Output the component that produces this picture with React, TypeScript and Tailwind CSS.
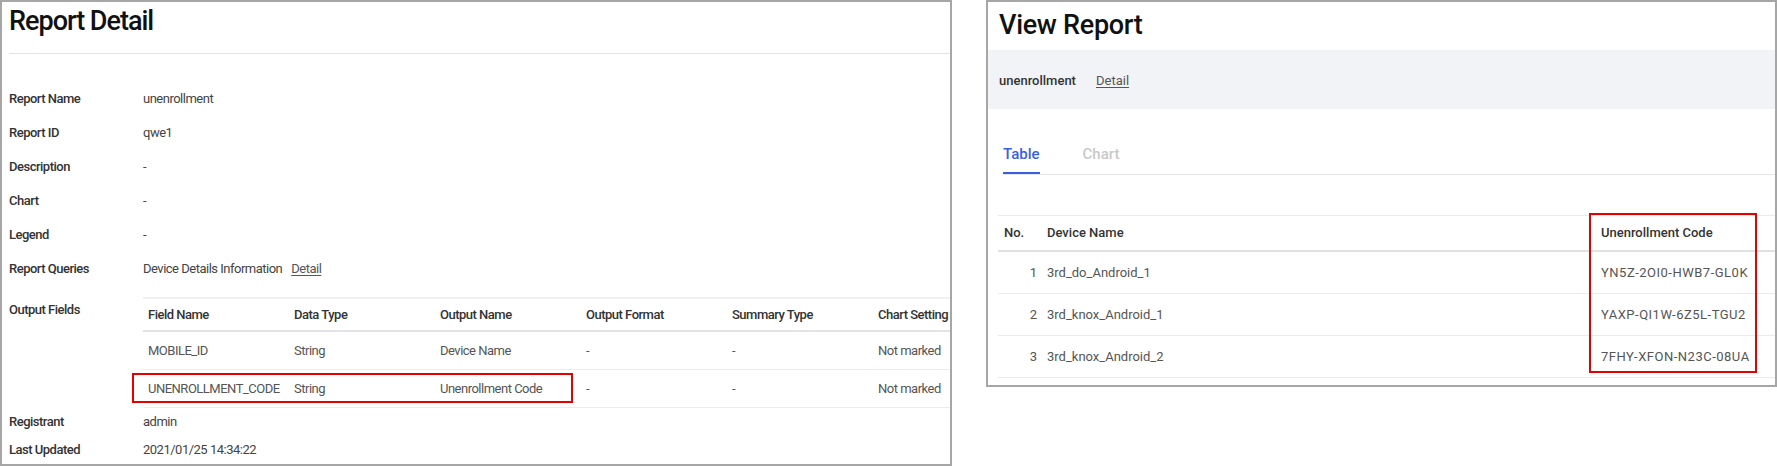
const infoRows = [
  { label: "Report Name", value: "unenrollment" },
  { label: "Report ID", value: "qwe1" },
  { label: "Description", value: "-" },
  { label: "Chart", value: "-" },
  { label: "Legend", value: "-" },
];

const fieldCols = ["Field Name", "Data Type", "Output Name", "Output Format", "Summary Type", "Chart Setting"];

const fieldRows = [
  ["MOBILE_ID", "String", "Device Name", "-", "-", "Not marked"],
  ["UNENROLLMENT_CODE", "String", "Unenrollment Code", "-", "-", "Not marked"],
];

const devices = [
  { no: 1, name: "3rd_do_Android_1", code: "YN5Z-2OI0-HWB7-GL0K" },
  { no: 2, name: "3rd_knox_Android_1", code: "YAXP-QI1W-6Z5L-TGU2" },
  { no: 3, name: "3rd_knox_Android_2", code: "7FHY-XFON-N23C-08UA" },
];

function ReportDetail() {
  return (
    <section className="relative h-[466px] w-[952px] shrink-0 overflow-hidden border-2 border-[#a6a6a6] bg-white pl-[7px] text-[13px] tracking-[-0.5px]">
      <h1 className="mt-[1px] h-[36px] text-[27px] font-medium leading-[36px] tracking-[-1px] text-[#111]">
        Report Detail
      </h1>
      <div className="mt-[14px] h-px bg-[#e3e3e3]" />

      <div className="mt-[28px]">
        {infoRows.map((row) => (
          <div key={row.label} className="flex h-[34px] items-center">
            <div className="w-[134px] shrink-0 font-medium text-[#333]">{row.label}</div>
            <div className="text-[#444]">{row.value}</div>
          </div>
        ))}
        <div className="flex h-[34px] items-center">
          <div className="w-[134px] shrink-0 font-medium text-[#333]">Report Queries</div>
          <div className="text-[#444]">Device Details Information</div>
          <a className="ml-[9px] text-[#555] underline underline-offset-2">Detail</a>
        </div>
      </div>

      <div className="mt-[11px] flex">
        <div className="w-[134px] shrink-0 pt-[3px] font-medium leading-[20px] text-[#333]">Output Fields</div>
        <div className="shrink-0">
          <div className="flex h-[35px] items-center border-t-2 border-b-2 border-t-[#eef0f4] border-b-[#e2e3e6] font-medium text-[#333]">
            {fieldCols.map((c) => (
              <div key={c} className="w-[146px] shrink-0 pl-[5px]">{c}</div>
            ))}
          </div>
          {fieldRows.map((r) => (
            <div key={r[0]} className="flex h-[38px] items-center border-b border-[#eaecf0] text-[#555]">
              {r.map((v, i) => (
                <div key={i} className="w-[146px] shrink-0 pl-[5px]">{v}</div>
              ))}
            </div>
          ))}
        </div>
      </div>

      <div className="flex h-[28px] items-center">
        <div className="w-[134px] shrink-0 font-medium text-[#333]">Registrant</div>
        <div className="text-[#444]">admin</div>
      </div>
      <div className="flex h-[28px] items-center">
        <div className="w-[134px] shrink-0 font-medium text-[#333]">Last Updated</div>
        <div className="text-[#444]">2021/01/25 14:34:22</div>
      </div>

      {/* highlight */}
      <div className="absolute left-[130px] top-[371px] h-[30px] w-[441px] border-2 border-[#e60000]" />
    </section>
  );
}

function ViewReport() {
  return (
    <section className="relative h-[387px] w-[791px] shrink-0 border-2 border-[#a6a6a6] bg-white text-[13px]">
      <h1 className="h-[48px] pl-[11px] pt-[5px] text-[27px] font-medium leading-[36px] tracking-[-0.3px] text-[#111]">
        View Report
      </h1>
      <div className="flex h-[59px] items-center bg-[#f2f3f7] pl-[11px] pt-[2px]">
        <span className="font-medium text-[#333]">unenrollment</span>
        <a className="ml-[20px] text-[#555] underline underline-offset-2">Detail</a>
      </div>

      <div className="ml-[15px] mt-[26px] flex gap-[43px] border-b border-[#e6e6e6] text-[15px] font-medium leading-[20px]">
        <div className="border-b-2 border-[#3a5fe5] pb-[8px] pt-[9px] text-[#3a5fe5]">Table</div>
        <div className="pb-[10px] pt-[9px] text-[#c9c9c9]">Chart</div>
      </div>

      <div className="ml-[10px] mt-[40px]">
        <div className="flex h-[37px] items-center border-t border-b-2 border-t-[#e9ebef] border-b-[#e0e1e4] font-medium text-[#333]">
          <div className="w-[44px] shrink-0 pl-[6px]">No.</div>
          <div className="flex-1 pl-[5px]">Device Name</div>
          <div className="w-[179px] shrink-0 pl-[5px]">Unenrollment Code</div>
        </div>
        {devices.map((d) => (
          <div key={d.no} className="flex h-[42px] items-center border-b border-[#e9ebf0] text-[#555]">
            <div className="w-[44px] shrink-0 pr-[5px] text-right">{d.no}</div>
            <div className="flex-1 pl-[5px]">{d.name}</div>
            <div className="w-[179px] shrink-0 pl-[5px] tracking-[0.5px]">{d.code}</div>
          </div>
        ))}
      </div>

      {/* highlight */}
      <div className="absolute left-[601px] top-[211px] h-[160px] w-[168px] border-2 border-[#e60000]" />
    </section>
  );
}

export default function App() {
  return (
    <div className="flex h-[466px] w-[1777px] items-start gap-[34px] bg-white font-['Roboto','Liberation_Sans',sans-serif]">
      <ReportDetail />
      <ViewReport />
    </div>
  );
}
